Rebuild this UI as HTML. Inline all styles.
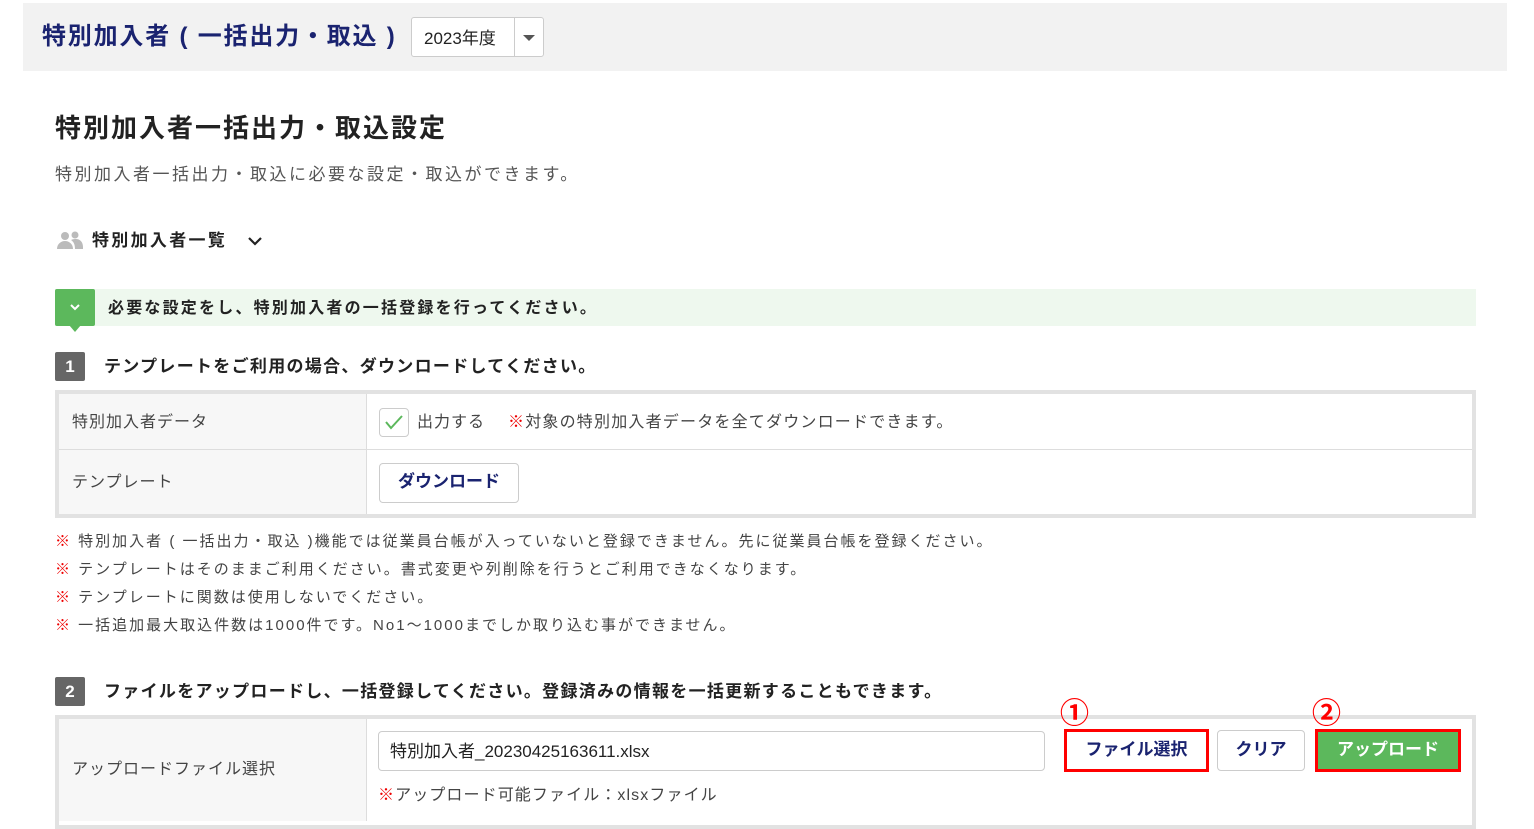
<!DOCTYPE html>
<html><head><meta charset="utf-8"><style>
*{box-sizing:border-box;margin:0;padding:0}
body{width:1534px;height:829px;background:#fff;position:relative;overflow:hidden;font-family:"Liberation Sans","Noto Sans CJK JP",sans-serif;color:#333}
.a{position:absolute;white-space:nowrap}
.hdr{left:23px;top:3px;width:1484px;height:68px;background:#f2f2f2}
.badge{width:30px;height:29px;background:#666;color:#fff;font-weight:bold;font-size:17px;text-align:center;line-height:29px;border-radius:2px}
.step{font-size:17px;font-weight:bold;color:#222;letter-spacing:1.3px}
.note{font-size:15px;color:#444;left:55px;letter-spacing:2px}
.note b{color:#e00;font-weight:normal}
.btn{background:#fff;border:1px solid #ccc;border-radius:4px;font-weight:bold;font-size:17px;color:#1a2370;text-align:center}
</style></head><body>
<div class="a hdr"></div>
<div class="a" style="left:42px;top:16px;font-size:24px;font-weight:bold;color:#1a2370;letter-spacing:1.8px">特別加入者 ( 一括出力・取込 )</div>
<div class="a" style="left:411px;top:17px;width:133px;height:40px;background:#fff;border:1px solid #ccc;border-radius:3px"></div>
<div class="a" style="left:424px;top:24px;font-size:17px;color:#222">2023年度</div>
<div class="a" style="left:514px;top:18px;width:1px;height:38px;background:#ccc"></div>
<div class="a" style="left:523px;top:35px;width:0;height:0;border-left:6px solid transparent;border-right:6px solid transparent;border-top:6px solid #555"></div>

<div class="a" style="left:55px;top:108px;font-size:26px;font-weight:bold;color:#222;letter-spacing:2px">特別加入者一括出力・取込設定</div>
<div class="a" style="left:55px;top:160px;font-size:17px;color:#555;letter-spacing:2.5px">特別加入者一括出力・取込に必要な設定・取込ができます。</div>

<svg class="a" style="left:56px;top:230px" width="28" height="20" viewBox="0 0 28 20"><circle cx="9" cy="6" r="4" fill="#bbb"/><circle cx="19" cy="5" r="3.5" fill="#bbb"/><path d="M1 19c0-5 4-8 8-8s8 3 8 8z" fill="#bbb"/><path d="M15 10c2-1 4-1 5-1 4 0 7 3 7 8v2h-8c0-4-1-7-4-9z" fill="#bbb"/></svg>
<div class="a" style="left:92px;top:226px;font-size:17px;font-weight:bold;color:#222;letter-spacing:2.3px">特別加入者一覧</div>
<svg class="a" style="left:247px;top:235px" width="16" height="12" viewBox="0 0 16 12"><path d="M2 3l6 6 6-6" stroke="#222" stroke-width="2.2" fill="none"/></svg>

<div class="a" style="left:55px;top:289px;width:1421px;height:37px;background:#eef8ee"></div>
<div class="a" style="left:55px;top:289px;width:40px;height:37px;background:#5cb85c;border-radius:2px"></div>
<div class="a" style="left:69px;top:325px;border-left:6px solid transparent;border-right:6px solid transparent;border-top:7px solid #5cb85c"></div>
<svg class="a" style="left:69px;top:302px" width="12" height="10" viewBox="0 0 12 10"><path d="M2 3l4 4 4-4" stroke="#fff" stroke-width="2" fill="none"/></svg>
<div class="a" style="left:108px;top:294px;font-size:16px;font-weight:bold;color:#222;letter-spacing:2.2px">必要な設定をし、特別加入者の一括登録を行ってください。</div>

<div class="a badge" style="left:55px;top:352px">1</div>
<div class="a step" style="left:104px;top:352px">テンプレートをご利用の場合、ダウンロードしてください。</div>

<div class="a" style="left:55px;top:390px;width:1421px;height:128px;border:4px solid #e2e2e2;background:#fff"></div>
<div class="a" style="left:59px;top:394px;width:308px;height:120px;background:#f7f7f7;border-right:1px solid #ddd"></div>
<div class="a" style="left:59px;top:449px;width:1413px;height:1px;background:#ddd"></div>
<div class="a" style="left:72px;top:408px;font-size:16px;color:#444;letter-spacing:1px">特別加入者データ</div>
<div class="a" style="left:72px;top:468px;font-size:16px;color:#444;letter-spacing:1px">テンプレート</div>
<div class="a" style="left:379px;top:408px;width:30px;height:29px;border:1px solid #ccc;border-radius:4px;background:#fff"></div>
<svg class="a" style="left:383px;top:412px" width="22" height="20" viewBox="0 0 22 20"><path d="M3 10l5 6 11-12" stroke="#5cb85c" stroke-width="2" fill="none"/></svg>
<div class="a" style="left:417px;top:408px;font-size:16px;color:#444;letter-spacing:1px">出力する</div>
<div class="a" style="left:508px;top:408px;font-size:16px;color:#444;letter-spacing:1.2px"><span style="color:#e00">※</span>対象の特別加入者データを全てダウンロードできます。</div>
<div class="a btn" style="left:379px;top:463px;width:140px;height:40px;line-height:36px">ダウンロード</div>

<div class="a note" style="top:530px"><b>※</b> 特別加入者 ( 一括出力・取込 )機能では従業員台帳が入っていないと登録できません。先に従業員台帳を登録ください。</div>
<div class="a note" style="top:558px"><b>※</b> テンプレートはそのままご利用ください。書式変更や列削除を行うとご利用できなくなります。</div>
<div class="a note" style="top:586px"><b>※</b> テンプレートに関数は使用しないでください。</div>
<div class="a note" style="top:614px"><b>※</b> 一括追加最大取込件数は1000件です。No1～1000までしか取り込む事ができません。</div>

<div class="a badge" style="left:55px;top:677px">2</div>
<div class="a step" style="left:104px;top:677px">ファイルをアップロードし、一括登録してください。登録済みの情報を一括更新することもできます。</div>

<div class="a" style="left:55px;top:715px;width:1421px;height:114px;border:4px solid #e2e2e2;background:#fff"></div>
<div class="a" style="left:59px;top:719px;width:308px;height:102px;background:#f7f7f7;border-right:1px solid #ddd"></div>
<div class="a" style="left:72px;top:755px;font-size:16px;color:#444;letter-spacing:1px">アップロードファイル選択</div>
<div class="a" style="left:378px;top:731px;width:667px;height:40px;border:1px solid #ccc;border-radius:4px;background:#fff"></div>
<div class="a" style="left:390px;top:737px;font-size:17px;color:#222">特別加入者_20230425163611.xlsx</div>
<div class="a" style="left:378px;top:781px;font-size:16px;color:#444;letter-spacing:1.1px"><span style="color:#e00">※</span>アップロード可能ファイル：xlsxファイル</div>

<div class="a btn" style="left:1064px;top:729px;width:145px;height:43px;line-height:35px;border:3px solid #f00;border-radius:0">ファイル選択</div>
<div class="a btn" style="left:1217px;top:730px;width:88px;height:41px;line-height:37px">クリア</div>
<div class="a btn" style="left:1315px;top:729px;width:146px;height:43px;line-height:35px;border:3px solid #f00;border-radius:0;background:#5cb85c;color:#fff">アップロード</div>
<div class="a" style="left:1060px;top:690px;font-size:29px;font-weight:bold;color:#f00;font-family:'Noto Sans CJK JP',sans-serif">①</div>
<div class="a" style="left:1312px;top:690px;font-size:29px;font-weight:bold;color:#f00;font-family:'Noto Sans CJK JP',sans-serif">②</div>
</body></html>
